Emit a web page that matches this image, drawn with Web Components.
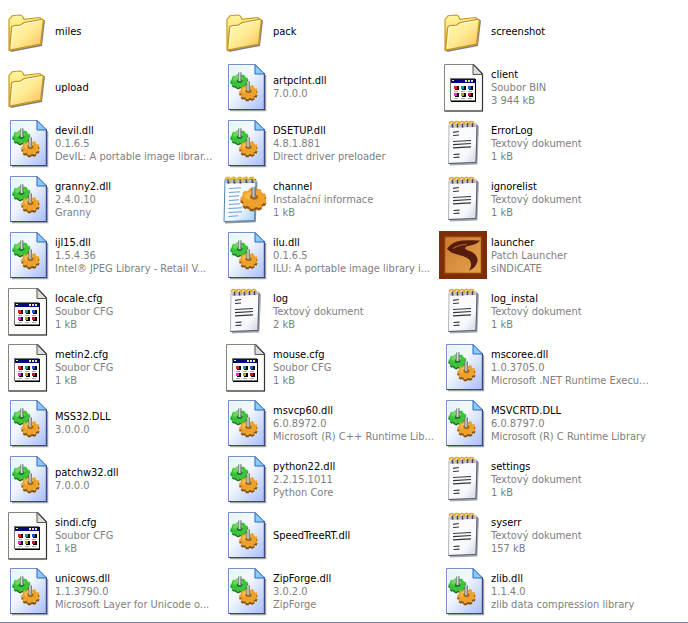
<!DOCTYPE html>
<html lang="cs">
<head>
<meta charset="utf-8">
<title>Soubory</title>
<style>
html { height: 100%; }
body { margin: 0; min-height: 100%; display: flex; background: #fff; font-family: "DejaVu Sans Condensed", "DejaVu Sans", sans-serif; font-size: 11px; line-height: 13px; }
</style>
</head>
<body>
<file-list></file-list>

<template id="icon-folder">
<svg viewBox="0 0 48 48" aria-hidden="true">
<defs>
<linearGradient id="f" x1="0" y1="0" x2="1" y2="1"><stop offset="0" stop-color="#fffac0"/><stop offset=".5" stop-color="#ffeb92"/><stop offset="1" stop-color="#fbbd5c"/></linearGradient>
<linearGradient id="b" x1="0" y1="0" x2="0" y2="1"><stop offset="0" stop-color="#fff59a"/><stop offset="1" stop-color="#f2cc5c"/></linearGradient>
</defs>
<g transform="translate(0 .5)">
<path d="M8 44.500 39 38.500 42 13 40 12 38 37 7 43z" fill="#555" opacity=".75"/>
<path d="M6 42.500V12.500q0-1.500 1.500-2L9 8.200 17 7.500q2 0 2.800 1.800L21 11.800 36.500 10q1.500 0 1.500 1.500V36z" fill="url(#b)" stroke="#c79a22" stroke-width="1.200"/>
<path d="M6.600 42.600 8.500 20.500q.3-2 2.500-2.300L17.500 17.600 21 15 38.500 11.800q2-.3 1.800 1.800L37.600 36.600z" fill="url(#f)" stroke="#c6951f" stroke-width="1.300"/>
<path d="M8.200 40.500 10 21q.2-1.400 1.600-1.600l6.400-.6 3.500-2.600 17-3" fill="none" stroke="#fffde0" stroke-width=".9"/>
</g>
</svg>
</template>

<template id="icon-dll">
<svg viewBox="0 0 48 48" aria-hidden="true">
<defs>
<linearGradient id="p" x1="0" y1="0" x2="1" y2="1"><stop offset="0" stop-color="#e0f3ff"/><stop offset=".4" stop-color="#f4f8ff"/><stop offset="1" stop-color="#a9bdf4"/></linearGradient>
<linearGradient id="s" x1="0" x2="1"><stop offset="0" stop-color="#6a6f74"/><stop offset=".4" stop-color="#d8d8d8"/><stop offset="1" stop-color="#62686b"/></linearGradient>
</defs>
<path d="M9 47.500H44.500V12" fill="none" stroke="#777" stroke-width="1.500" opacity=".7"/>
<path d="M7.500 1.500H34L43.500 11V46.500H7.500z" fill="url(#p)" stroke="#7191cb"/>
<path d="M43.400 10V46.500H7.500" fill="none" stroke="#34488c" stroke-width="1.200"/>
<path d="M8.600 45V2.600H33.500" fill="none" stroke="#fff"/>
<path d="M34 1.500V11H43.500z" fill="#8ccaff" stroke="#2c67bb"/>
<g transform="translate(18.500 19.500) scale(1 .76) rotate(10)" fill="#16681f" stroke="#16681f" stroke-width="3"><circle r="6.500"/><circle r="7.500" fill="none" pathLength="18" stroke-dasharray="1.100 .9"/></g>
<g transform="translate(18.500 18) scale(1 .76) rotate(10)" fill="#3fc43b" stroke="#3fc43b" stroke-width="3"><circle r="6.500"/><circle r="7.500" fill="none" pathLength="18" stroke-dasharray="1.100 .9"/></g>
<ellipse cx="17" cy="15.500" rx="5" ry="3" fill="#8be876" opacity=".6"/>
<ellipse cx="18.500" cy="18" rx="3" ry="2" fill="#1c8728"/>
<path d="M17 9.500q1.700-1.200 3.500 0V17.500q-1.700 1.200-3.500 0z" fill="url(#s)"/>
<g transform="translate(27.500 31) scale(1 .8) rotate(8)" fill="#8a4f0c" stroke="#8a4f0c" stroke-width="3"><circle r="6.500"/><circle r="7.700" fill="none" pathLength="18" stroke-dasharray="1.100 .9"/></g>
<g transform="translate(27.500 29) scale(1 .8) rotate(8)" fill="#eca32f" stroke="#eca32f" stroke-width="3"><circle r="6.500"/><circle r="7.700" fill="none" pathLength="18" stroke-dasharray="1.100 .9"/></g>
<ellipse cx="26" cy="27" rx="5" ry="3" fill="#ffd068" opacity=".5"/>
<ellipse cx="27.500" cy="28" rx="3.200" ry="2.200" fill="#b06a12"/>
<path d="M25.500 18.500q1.800-1.200 3.500 0V27.500q-1.700 1.200-3.500 0z" fill="url(#s)"/>
</svg>
</template>

<template id="icon-generic">
<svg viewBox="0 0 48 48" aria-hidden="true">
<path d="M5.500 1.500H34.500L43.500 11V48H5.500z" fill="#fcfcf9" stroke="#858585"/>
<path d="M34.500 1.500 43.500 11V48H5.500" fill="none" stroke="#333" stroke-width="1.200"/>
<path d="M34 1.500V11.500H43.500z" fill="#ddd" stroke="#555"/>
<g shape-rendering="crispEdges">
<path d="M12 16h25v23H12z" fill="#000"/><path d="M11 15h25v23H11z" fill="#777"/>
<path d="M12 16h24v21H12z" fill="#fff"/><path d="M12 16h24v4H12z" fill="#000080"/>
<path d="M13 17h2v1h-2zM26 17h2v2h-2zM29 17h2v2h-2zM32 17h2v2h-2z" fill="#e7e7b0"/>
<path d="M16 23h4v4h-4zM23 23h4v4h-4zM30 23h4v4h-4zM16 30h4v4h-4zM23 30h4v4h-4zM30 30h4v4h-4z" fill="#000"/>
<path d="M15 23h3v3h-3z" fill="#e02030"/><path d="M22 23h3v3h-3z" fill="#109a9a"/><path d="M29 23h3v3h-3z" fill="#2055d0"/>
<path d="M15 30h3v3h-3z" fill="#ee22dd"/><path d="M22 30h3v3h-3z" fill="#a5a510"/><path d="M29 30h3v3h-3z" fill="#c81538"/>
<path d="M15 28h4v1h-4zM22 28h4v1h-4zM29 28h4v1h-4zM15 35h4v1h-4zM22 35h4v1h-4zM29 35h4v1h-4z" fill="#aaa"/>
</g>
</svg>
</template>

<template id="icon-text">
<svg viewBox="0 0 48 48" aria-hidden="true">
<defs><linearGradient id="t" x1="0" y1="0" x2="1" y2="1"><stop offset="0" stop-color="#fff"/><stop offset=".7" stop-color="#f7f8fb"/><stop offset="1" stop-color="#cbd0dc"/></linearGradient></defs>
<path d="M11 45.500 37.500 44.500 39 7" fill="none" stroke="#888" stroke-width="2" opacity=".7"/>
<path d="M10 6 38 5 37 43.500 9.500 44.500z" fill="url(#t)" stroke="#9aa0ac" stroke-width=".8"/>
<path d="M38 6 37 43.500 9.500 44.500" fill="none" stroke="#555b70"/>
<path d="M11 7.500 37 6.500" stroke="#c3c5da" stroke-width="3"/>
<path d="M13.500 8.500v-4M18.500 8.500v-4M23.500 8.500v-4M28.500 8v-4M33.500 8v-4" stroke="#3e3a5c" stroke-width="1.600"/>
<path d="M10.500 5q0-2.500 2.500-2.500t1.500 4.500M15.500 5q0-2.500 2.500-2.500t1.500 4.500M20.500 5q0-2.500 2.500-2.500t1.500 4.500M25.500 5q0-2.500 2.500-2.500t1.500 4M30.500 5q0-2.500 2.500-2.500t1.500 4" fill="none" stroke="#d8aa28" stroke-width="1.700"/>
<path d="M14 13.300 20 12.500M14 16.500 20 16M14 22.500 32 21.500M14 25.700 32 24.500M14 28.800 32 27.800M14.500 35.500 20.500 35.200M14.500 38.500 20.500 38.200" fill="none" stroke="#34343c" stroke-width="1.200"/>
</svg>
</template>

<template id="icon-setup">
<svg viewBox="0 0 48 48" aria-hidden="true">
<defs>
<linearGradient id="t" x1="0" y1="0" x2="1" y2="1"><stop offset="0" stop-color="#fff"/><stop offset=".6" stop-color="#f1f9ff"/><stop offset="1" stop-color="#9bcdf4"/></linearGradient>
<linearGradient id="s" x1="0" x2="1"><stop offset="0" stop-color="#5c6268"/><stop offset=".4" stop-color="#c8cacd"/><stop offset="1" stop-color="#666b70"/></linearGradient>
</defs>
<path d="M4 47.500 34 46.500 35.500 7" fill="none" stroke="#666" stroke-width="1.800" opacity=".7"/>
<path d="M4 5 35 4.500 33.500 45.500 3 46.500z" fill="url(#t)" stroke="#4d82b6"/>
<path d="M5 7 34 6.500" stroke="#a9b5d8" stroke-width="3"/>
<path d="M7.500 8.500v-4M13.500 8.500v-4M19.500 8.500v-4M25.500 8v-4M31.500 8v-4" stroke="#3e3a5c" stroke-width="1.800"/>
<path d="M4.500 5q0-2.500 2.500-2.500t1.500 4.500M10.500 5q0-2.500 2.500-2.500t1.500 4.500M16.500 5q0-2.500 2.500-2.500t1.500 4.500M22.500 5q0-2.500 2.500-2.500t1.500 4M28.500 5q0-2.500 2.500-2.500t1.500 4" fill="none" stroke="#e2b820" stroke-width="2"/>
<path d="M8 13.500 20 12.800M8 17.500 19 16.800M8 21.500 18 20.800M8 25.500 18 24.800M8 29.500 19 28.800M7.500 33.500 21 32.800M7.500 37.500 21 36.800M7.500 41.500 17 40.800" stroke="#6d9dd0" fill="none"/>
<g transform="translate(32.500 26) scale(1 .8) rotate(8)" fill="#955510" stroke="#955510" stroke-width="4"><circle r="9.500"/><circle r="11" fill="none" pathLength="18" stroke-dasharray="1.100 .9"/></g>
<g transform="translate(32.500 23.500) scale(1 .8) rotate(8)" fill="#eea02c" stroke="#eea02c" stroke-width="4"><circle r="9.500"/><circle r="11" fill="none" pathLength="18" stroke-dasharray="1.100 .9"/></g>
<ellipse cx="30" cy="21" rx="7" ry="4" fill="#ffcb62" opacity=".5"/>
<ellipse cx="33" cy="22" rx="4" ry="2.800" fill="#a7661a"/>
<path d="M30.500 12.500q2.200-1.500 4.500 0V21.500q-2.200 1.500-4.500 0z" fill="url(#s)"/>
</svg>
</template>

<template id="icon-launcher">
<svg viewBox="0 0 48 48" aria-hidden="true">
<defs>
<linearGradient id="l" x1="0" y1="0" x2="1" y2="1"><stop offset="0" stop-color="#cf7a30"/><stop offset="1" stop-color="#e2a44c"/></linearGradient>
<filter id="soft"><feGaussianBlur stdDeviation=".7"/></filter>
</defs>
<path d="M0 0h48v48H0z" fill="#7d2d08"/>
<path d="M5.500 5.500h37v37h-37z" fill="url(#l)" stroke="#963e0c" stroke-width="1.500"/>
<g filter="url(#soft)"><path d="M8 17.500Q14 10 23 9.500T41 9.500Q38 13.500 31 14.500 26 15.500 26 17.500 27 19 32 20.500 39 24 38.500 30 37 37 30 39.500 33.500 34 31 29.500 28 25.500 20 24 11 22 8 17.500z" fill="#571c0a"/><path d="M14 17.500Q20 13.500 28 13.500" fill="none" stroke="#98501c" stroke-width="1.500"/></g>
</svg>
</template>

<script>
class FileIcon extends HTMLElement {
  connectedCallback() {
    if (this.shadowRoot) return;
    const root = this.attachShadow({ mode: "open" });
    root.innerHTML = `<style>
      :host { display: block; flex: none; width: 48px; height: 48px; }
      svg { display: block; width: 100%; height: 100%; overflow: visible; }
    </style>`;
    root.append(document.getElementById("icon-" + this.getAttribute("kind")).content.cloneNode(true));
  }
}
customElements.define("file-icon", FileIcon);

class FileTile extends HTMLElement {
  connectedCallback() {
    if (this.shadowRoot) return;
    this.attachShadow({ mode: "open" }).innerHTML = `<style>
      :host { display: flex; align-items: center; gap: 4px; height: 56px; min-width: 0; }
      .text { min-width: 0; color: #808080; white-space: nowrap; }
      .name { color: #000; }
      ::slotted(*) { display: block; }
    </style>
    <file-icon kind="${this.getAttribute("kind")}"></file-icon>
    <div class="text"><div class="name"><slot name="name"></slot></div><slot></slot></div>`;
  }
}
customElements.define("file-tile", FileTile);

const FILES = [
  ["folder", "miles"], ["folder", "pack"], ["folder", "screenshot"],
  ["folder", "upload"], ["dll", "artpclnt.dll", "7.0.0.0"], ["generic", "client", "Soubor BIN", "3 944 kB"],
  ["dll", "devil.dll", "0.1.6.5", "DevIL: A portable image librar..."], ["dll", "DSETUP.dll", "4.8.1.881", "Direct driver preloader"], ["text", "ErrorLog", "Textový dokument", "1 kB"],
  ["dll", "granny2.dll", "2.4.0.10", "Granny"], ["setup", "channel", "Instalační informace", "1 kB"], ["text", "ignorelist", "Textový dokument", "1 kB"],
  ["dll", "ijl15.dll", "1.5.4.36", "Intel® JPEG Library - Retail V..."], ["dll", "ilu.dll", "0.1.6.5", "ILU: A portable image library i..."], ["launcher", "launcher", "Patch Launcher", "siNDiCATE"],
  ["generic", "locale.cfg", "Soubor CFG", "1 kB"], ["text", "log", "Textový dokument", "2 kB"], ["text", "log_instal", "Textový dokument", "1 kB"],
  ["generic", "metin2.cfg", "Soubor CFG", "1 kB"], ["generic", "mouse.cfg", "Soubor CFG", "1 kB"], ["dll", "mscoree.dll", "1.0.3705.0", "Microsoft .NET Runtime Execu..."],
  ["dll", "MSS32.DLL", "3.0.0.0"], ["dll", "msvcp60.dll", "6.0.8972.0", "Microsoft (R) C++ Runtime Lib..."], ["dll", "MSVCRTD.DLL", "6.0.8797.0", "Microsoft (R) C Runtime Library"],
  ["dll", "patchw32.dll", "7.0.0.0"], ["dll", "python22.dll", "2.2.15.1011", "Python Core"], ["text", "settings", "Textový dokument", "1 kB"],
  ["generic", "sindi.cfg", "Soubor CFG", "1 kB"], ["dll", "SpeedTreeRT.dll"], ["text", "syserr", "Textový dokument", "157 kB"],
  ["dll", "unicows.dll", "1.1.3790.0", "Microsoft Layer for Unicode o..."], ["dll", "ZipForge.dll", "3.0.2.0", "ZipForge"], ["dll", "zlib.dll", "1.1.4.0", "zlib data compression library"]
];

class FileList extends HTMLElement {
  connectedCallback() {
    if (this.shadowRoot) return;
    this.attachShadow({ mode: "open" }).innerHTML = `<style>
      :host { display: block; flex: 1; box-sizing: border-box; padding: 3px 0 3px 3px; border-bottom: 1px solid #7b7ba5; }
      .grid { display: grid; grid-template-columns: repeat(auto-fill, 218px); }
    </style>
    <div class="grid" role="list">${FILES.map(([kind, name, ...details]) =>
      `<file-tile role="listitem" kind="${kind}"><span slot="name">${name}</span>${details.map(d => `<span>${d}</span>`).join("")}</file-tile>`).join("")}</div>`;
  }
}
customElements.define("file-list", FileList);
</script>
</body>
</html>
